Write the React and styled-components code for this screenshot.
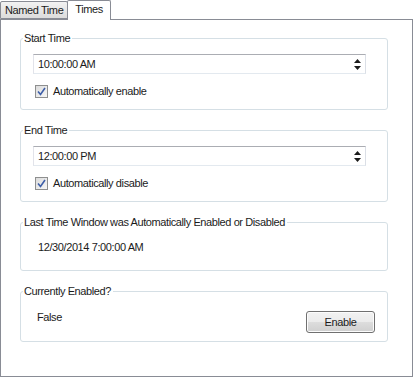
import styled, { createGlobalStyle } from "styled-components";

const GlobalStyle = createGlobalStyle`
  body {
    margin: 0;
    background: #ffffff;
    font-family: "Liberation Sans", Arial, sans-serif;
    font-size: 11px;
    letter-spacing: -0.4px;
    color: #1b1b1b;
  }
`;

const Window = styled.div`
  width: 415px;
  height: 377px;
  display: flex;
  flex-direction: column;
`;

const TabStrip = styled.div`
  display: flex;
  align-items: flex-end;
  height: 19px;
  position: relative;
  z-index: 1;
`;

const Tab = styled.div`
  box-sizing: border-box;
  height: ${(p) => (p.$active ? "20px" : "18px")};
  padding: ${(p) => (p.$active ? "1px 7px 0 7px" : "1px 4px 0 4px")};
  margin-right: ${(p) => (p.$active ? "0" : "-1px")};
  border: 1px solid #898c95;
  border-bottom: ${(p) => (p.$active ? "none" : "1px solid #898c95")};
  border-radius: 2px 2px 0 0;
  background: ${(p) =>
    p.$active ? "#ffffff" : "linear-gradient(#f2f2f2, #dcdcdc)"};
  line-height: 15px;
  margin-bottom: ${(p) => (p.$active ? "-1px" : "0")};
  z-index: ${(p) => (p.$active ? 2 : 1)};
`;

const Panel = styled.div`
  box-sizing: border-box;
  width: 413px;
  height: 358px;
  border: 1px solid #898c95;
  background: #ffffff;
  padding: 11px 24px 0 19px;
  display: flex;
  flex-direction: column;
  gap: 13px;
`;

const Group = styled.fieldset`
  margin: 0;
  min-width: 0;
  border: 1px solid #d5dfe5;
  border-radius: 3px;
  padding: ${(p) => p.$pad || "9px 21px 10px 12px"};
  display: flex;
  flex-direction: column;
`;

const Legend = styled.legend`
  padding: 0 2px 0 1px;
  margin-left: -10px;
  line-height: 14px;
  color: #1b1b1b;
`;

const SpinBox = styled.div`
  box-sizing: border-box;
  height: 20px;
  border: 1px solid #abadb3;
  border-color: #abadb3 #dbdfe6 #e3e9ef #e2e3ea;
  display: flex;
  align-items: center;
  padding-left: 4px;
`;

const SpinText = styled.span`
  flex: 1;
`;

const Arrows = styled.div`
  display: flex;
  flex-direction: column;
  justify-content: center;
  gap: 3px;
  width: 15px;
  align-items: center;
`;

const CheckRow = styled.label`
  display: flex;
  align-items: center;
  gap: 5px;
  margin-top: 9px;
  height: 16px;
  padding-left: 2px;
`;

const Box = styled.span`
  box-sizing: border-box;
  width: 13px;
  height: 13px;
  border: 1px solid #8e8f8f;
  background: linear-gradient(135deg, #dcdcdc, #f6f6f6);
  display: flex;
  align-items: center;
  justify-content: center;
`;

const ValueText = styled.div`
  line-height: 14px;
  padding-left: ${(p) => p.$indent || "4px"};
  margin-top: ${(p) => p.$top || "0"};
`;

const EnabledRow = styled.div`
  display: flex;
  justify-content: space-between;
  align-items: flex-start;
`;

const Button = styled.button`
  box-sizing: border-box;
  width: 69px;
  height: 22px;
  margin-top: 13px;
  border: 1px solid #707070;
  border-radius: 3px;
  background: linear-gradient(#f2f2f2 0%, #ebebeb 50%, #dddddd 51%, #cfcfcf 100%);
  box-shadow: inset 0 0 0 1px #fcfcfc;
  font: inherit;
  letter-spacing: inherit;
  color: #1b1b1b;
  padding: 0;
`;

const Arrow = ({ up }) => (
  <svg width="7" height="4" viewBox="0 0 7 4">
    <polygon points={up ? "3.5,0 7,4 0,4" : "0,0 7,0 3.5,4"} fill="#1b1b1b" />
  </svg>
);

const Check = () => (
  <svg width="9" height="9" viewBox="0 0 9 9">
    <path d="M1 4.5 L3.5 7.5 L8 1" fill="none" stroke="#3d5ea8" strokeWidth="1.6" />
  </svg>
);

const TimeGroup = ({ title, value, label }) => (
  <Group>
    <Legend>{title}</Legend>
    <SpinBox>
      <SpinText>{value}</SpinText>
      <Arrows>
        <Arrow up />
        <Arrow />
      </Arrows>
    </SpinBox>
    <CheckRow>
      <Box>
        <Check />
      </Box>
      {label}
    </CheckRow>
  </Group>
);

export default function App() {
  return (
    <>
      <GlobalStyle />
      <Window>
        <TabStrip>
          <Tab>Named Time</Tab>
          <Tab $active>Times</Tab>
        </TabStrip>
        <Panel>
          <TimeGroup title="Start Time" value="10:00:00 AM" label="Automatically enable" />
          <TimeGroup title="End Time" value="12:00:00 PM" label="Automatically disable" />
          <Group $pad="11px 21px 16px 12px">
            <Legend>Last Time Window was Automatically Enabled or Disabled</Legend>
            <ValueText $indent="5px">12/30/2014 7:00:00 AM</ValueText>
          </Group>
          <Group $pad="0 12px 8px 12px">
            <Legend>Currently Enabled?</Legend>
            <EnabledRow>
              <ValueText $top="12px">False</ValueText>
              <Button>Enable</Button>
            </EnabledRow>
          </Group>
        </Panel>
      </Window>
    </>
  );
}
